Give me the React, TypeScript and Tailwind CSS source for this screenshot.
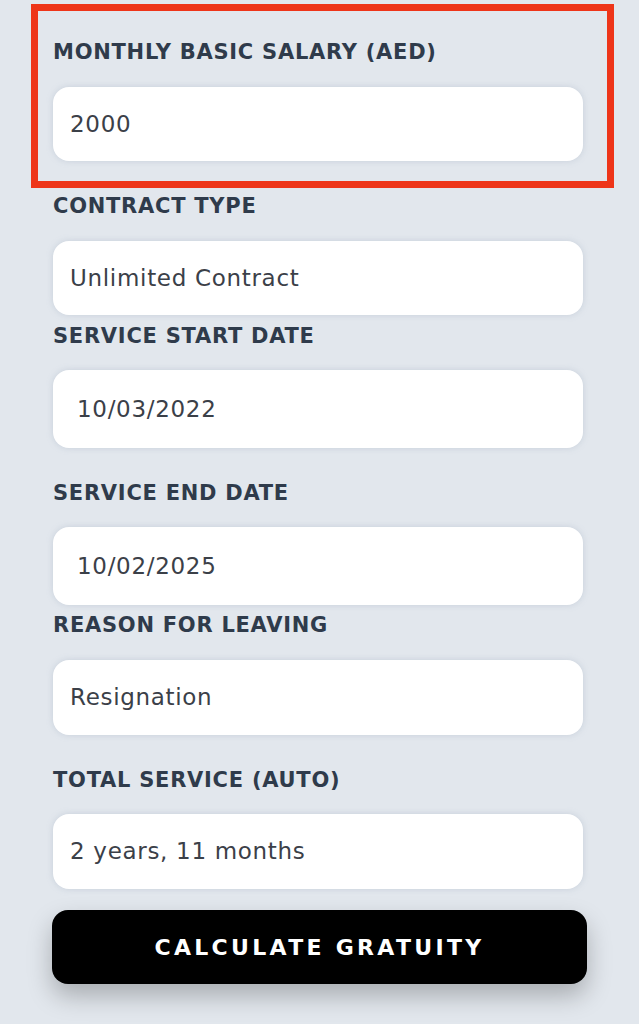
const labelCls =
  "block text-[21px] leading-[28px] font-bold tracking-[0.035em] text-[#2f3b4b]";
const boxCls =
  "flex items-center w-[530px] rounded-[16px] bg-white text-[23px] tracking-[0.03em] text-[#3b4048] shadow-[0_0_6px_rgba(148,163,184,0.35)]";

type FieldProps = {
  label: string;
  value: string;
  mt: string;
  gap?: string;
  h?: string;
  pl?: string;
};

const Field = ({ label, value, mt, gap = "mt-[21px]", h = "h-[74px]", pl = "pl-[17px]" }: FieldProps) => (
  <div className={mt}>
    <span className={labelCls}>{label}</span>
    <div className={`${boxCls} ${gap} ${h} ${pl}`}>{value}</div>
  </div>
);

export default function App() {
  return (
    <div
      className="w-[639px] h-[1024px] bg-[#e2e7ed] overflow-hidden pt-[4px]"
      style={{ fontFamily: '"DejaVu Sans", "Noto Sans", sans-serif' }}
    >
      {/* highlighted first field */}
      <div className="mx-[31px] w-[583px] h-[184px] border-[7px] border-[#ee3519] pt-[27px] pl-[15px]">
        <span className={labelCls}>MONTHLY BASIC SALARY (AED)</span>
        <div className={`${boxCls} mt-[21px] h-[74px] pl-[17px]`}>2000</div>
      </div>

      <div className="pl-[53px]">
        <Field label="CONTRACT TYPE" value="Unlimited Contract" mt="mt-[4px]" />
        <Field label="SERVICE START DATE" value="10/03/2022" mt="mt-[7px]" gap="mt-[20px]" h="h-[78px]" pl="pl-[24px]" />
        <Field label="SERVICE END DATE" value="10/02/2025" mt="mt-[31px]" gap="mt-[20px]" h="h-[78px]" pl="pl-[24px]" />
        <Field label="REASON FOR LEAVING" value="Resignation" mt="mt-[6px]" h="h-[75px]" />
        <Field label="TOTAL SERVICE (AUTO)" value="2 years, 11 months" mt="mt-[31px]" gap="mt-[20px]" h="h-[75px]" />

        <button className="mt-[21px] -ml-[1px] w-[535px] h-[74px] rounded-[16px] bg-black text-white text-[22px] font-bold tracking-[0.15em] shadow-[0_12px_24px_rgba(0,0,0,0.25)]">
          CALCULATE GRATUITY
        </button>
      </div>
    </div>
  );
}
